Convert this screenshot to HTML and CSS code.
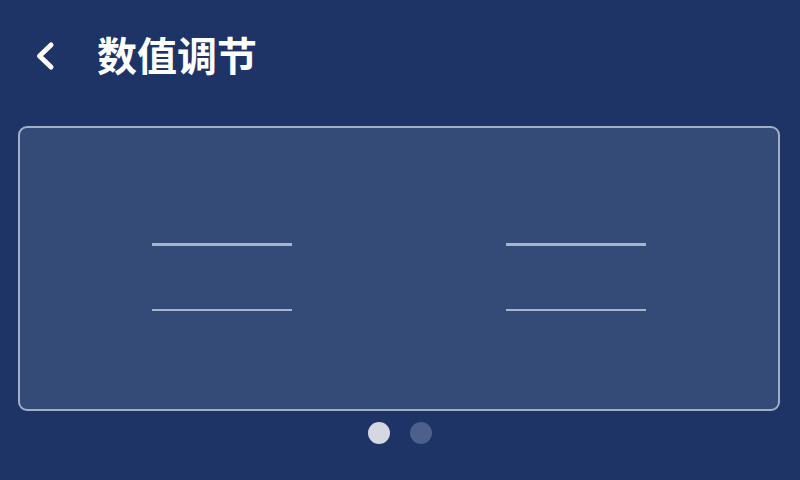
FILE: index.html
```html
<!DOCTYPE html>
<html lang="zh">
<head>
<meta charset="utf-8">
<title>数值调节</title>
<link rel="stylesheet" href="styles.css">
</head>
<body>
<div class="screen">
  <header class="header">
    <svg class="back" width="24" height="32" viewBox="0 0 24 32" aria-hidden="true">
      <path d="M19 5 L7.5 16 L19 27" fill="none" stroke="#ffffff" stroke-width="5" stroke-linecap="round" stroke-linejoin="round"/>
    </svg>
    <h1 class="title">数值调节</h1>
  </header>
  <section class="card">
    <div class="col">
      <div class="line line-top"></div>
      <div class="line line-bottom"></div>
    </div>
    <div class="col">
      <div class="line line-top"></div>
      <div class="line line-bottom"></div>
    </div>
  </section>
  <nav class="dots">
    <span class="dot active"></span>
    <span class="dot"></span>
  </nav>
</div>
</body>
</html>
```

FILE: styles.css
```css
html, body {
  margin: 0;
  padding: 0;
  background: #1e3366;
}
.screen {
  width: 800px;
  height: 480px;
  display: flex;
  flex-direction: column;
  font-family: "Noto Sans CJK SC", "Noto Sans", sans-serif;
  color: #ffffff;
}
.header {
  height: 112px;
  display: flex;
  align-items: center;
  padding-left: 32px;
  box-sizing: border-box;
}
.back {
  display: block;
  margin-right: 41px;
}
.title {
  margin: 0 0 4px 0;
  font-size: 40px;
  font-weight: 700;
  line-height: 1;
  letter-spacing: 0;
}
.card {
  margin: 14px 20px 0 18px;
  height: 285px;
  box-sizing: border-box;
  border: 2px solid #a3aec7;
  border-radius: 9px;
  background: #344b77;
  display: flex;
  justify-content: center;
  align-items: center;
  gap: 214px;
  padding-top: 16px;
}
.col {
  width: 140px;
  display: flex;
  flex-direction: column;
}
.line {
  background: #a9b3cb;
}
.line-top {
  height: 3px;
}
.line-bottom {
  height: 2px;
  margin-top: 63px;
}
.dots {
  display: flex;
  justify-content: center;
  gap: 20px;
  margin-top: 11px;
}
.dot {
  width: 22px;
  height: 22px;
  border-radius: 50%;
  background: #4c608b;
}
.dot.active {
  background: #d4d8e1;
}
```
